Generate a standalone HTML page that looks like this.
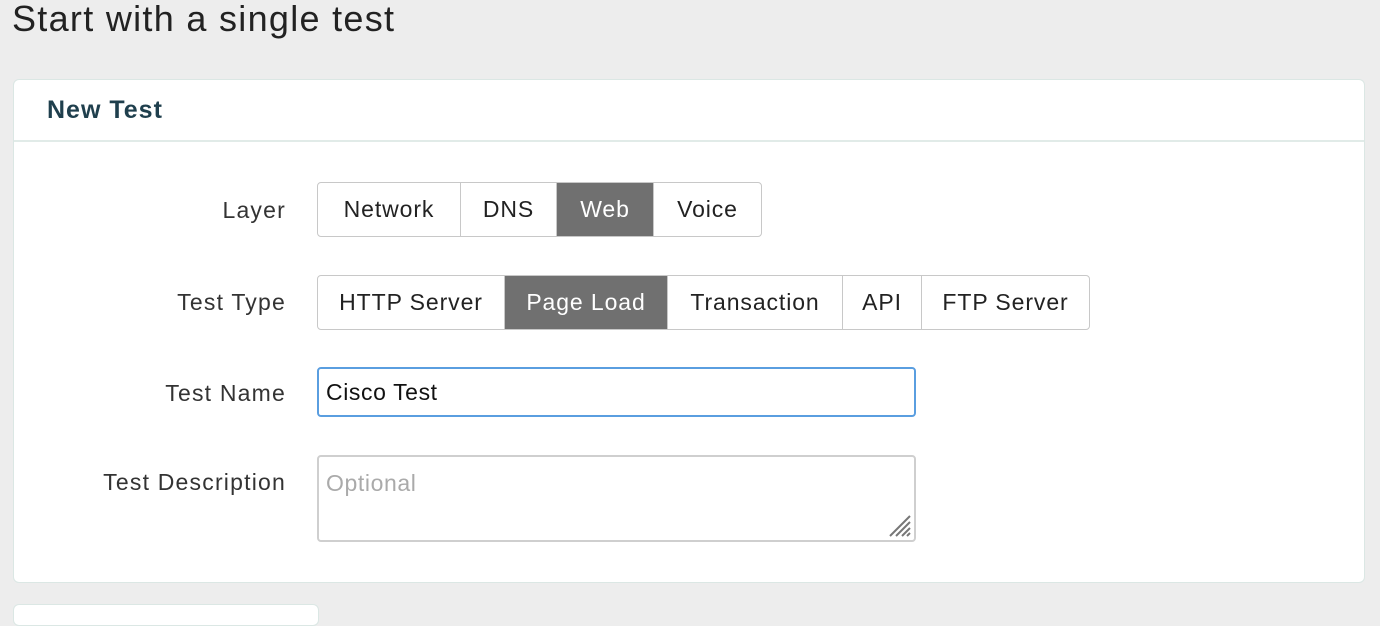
<!DOCTYPE html>
<html><head><style>
body{margin:0;width:1380px;height:612px;background:#ededed;font-family:"Liberation Sans",sans-serif;overflow:hidden;position:relative}
h1{position:absolute;left:12px;top:-2px;margin:0;font-weight:normal;font-size:36px;letter-spacing:1.3px;color:#222}
.card{position:absolute;left:13px;top:79px;width:1350px;height:502px;background:#fff;border:1px solid #dbe7e4;border-radius:6px}
.hd{height:60px;border-bottom:2px solid #e1ebe8;}
.hd span{position:absolute;left:33px;top:16px;font-size:25px;letter-spacing:1px;font-weight:bold;color:#1f3f4d}
.lbl{position:absolute;right:1078px;font-size:23px;letter-spacing:1.2px;color:#333;text-align:right;white-space:nowrap}
.grp{position:absolute;left:303px;display:flex;height:53px;border:1px solid #c8c8c8;border-radius:4px;overflow:hidden}
.grp div{font-size:23px;letter-spacing:0.9px;color:#222;display:flex;align-items:center;justify-content:center;border-left:1px solid #c8c8c8;box-sizing:border-box}
.grp div:first-child{border-left:none}
.grp .on{background:#707070;color:#fff}
.inp{position:absolute;left:303px;width:599px;box-sizing:border-box;border-radius:4px;font-size:23px;letter-spacing:0.6px;padding-left:7px}
.tab{position:absolute;left:13px;top:604px;width:304px;height:20px;background:#fff;border:1px solid #dbe7e4;border-radius:6px}
</style></head><body>
<h1>Start with a single test</h1>
<div class="card">
<div class="hd"><span>New Test</span></div>
<div class="lbl" style="top:117px">Layer</div>
<div class="grp" style="top:102px"><div style="width:142px">Network</div><div style="width:96px">DNS</div><div class="on" style="width:97px">Web</div><div style="width:108px">Voice</div></div>
<div class="lbl" style="top:209px">Test Type</div>
<div class="grp" style="top:195px"><div style="width:186px">HTTP Server</div><div class="on" style="width:163px">Page Load</div><div style="width:175px">Transaction</div><div style="width:79px">API</div><div style="width:168px">FTP Server</div></div>
<div class="lbl" style="top:300px">Test Name</div>
<div class="inp" style="top:287px;height:50px;border:2px solid #5a9ee0;line-height:46px;color:#111">Cisco Test</div>
<div class="lbl" style="top:389px">Test Description</div>
<div class="inp" style="top:375px;height:87px;border:2px solid #cfcfcf;color:#aaa;padding-top:13px">Optional
<svg style="position:absolute;right:2px;bottom:2px" width="24" height="24"><path d="M2 22L22 2M8 22L22 8M14 22L22 14M19 22L22 19" stroke="#777" stroke-width="2"/></svg></div>
</div>
<div class="tab"></div>
</body></html>
